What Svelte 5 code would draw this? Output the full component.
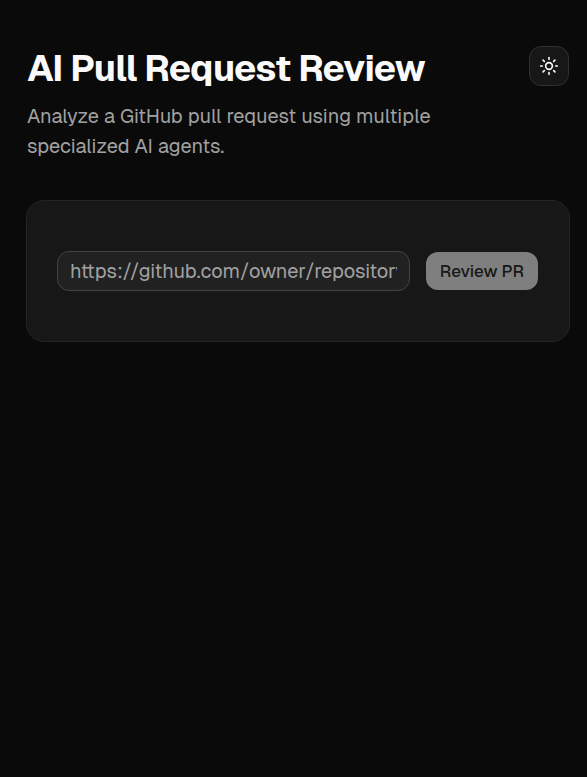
<script lang="ts">
	let prUrl = $state('');
	let isDark = $state(true);

	const rays = [0, 45, 90, 135, 180, 225, 270, 315];

	function toggleTheme() {
		isDark = !isDark;
	}

	function handleSubmit(event: SubmitEvent) {
		event.preventDefault();
	}
</script>

<main class="page" class:light={!isDark}>
	<header class="header">
		<div class="intro">
			<h1>AI Pull Request Review</h1>
			<p>Analyze a GitHub pull request using multiple specialized AI agents.</p>
		</div>
		<button type="button" class="theme-btn" onclick={toggleTheme} aria-label="Toggle theme">
			<svg viewBox="0 0 24 24" aria-hidden="true">
				<circle cx="12" cy="12" r="4" />
				{#each rays as angle}
					<path d="M12 2v2" transform="rotate({angle} 12 12)" />
				{/each}
			</svg>
		</button>
	</header>

	<section class="card">
		<form onsubmit={handleSubmit}>
			<input
				type="text"
				bind:value={prUrl}
				placeholder="https://github.com/owner/repository/pull/123"
				aria-label="Pull request URL"
			/>
			<button type="submit" class="review-btn" disabled={!prUrl}>Review PR</button>
		</form>
	</section>
</main>

<style>
	:global(body) {
		background: #0a0a0a;
	}

	.page {
		--bg: #0a0a0a;
		--card: #171717;
		--field: #212121;
		--border: #242424;
		--field-border: #444444;
		--text: #fafafa;
		--muted: #a1a1a1;

		box-sizing: border-box;
		min-height: 100vh;
		padding: 46px 17px 46px 26px;
		background: var(--bg);
		color: var(--text);
		font-family: Geist, Inter, 'Liberation Sans', sans-serif;
	}

	.page.light {
		--bg: #ffffff;
		--card: #ffffff;
		--field: #ffffff;
		--border: #e5e5e5;
		--field-border: #d4d4d4;
		--text: #0a0a0a;
		--muted: #737373;
	}

	.header {
		display: flex;
		align-items: flex-start;
		justify-content: space-between;
		gap: 20px;
		margin-bottom: 39px;
		padding: 0 1px;
	}

	.intro {
		max-width: 420px;
	}

	h1 {
		margin: 0 0 10px;
		font-size: 37px;
		font-weight: 700;
		line-height: 45px;
		letter-spacing: -0.02em;
		white-space: nowrap;
	}

	p {
		margin: 0;
		color: var(--muted);
		font-size: 20px;
		line-height: 30px;
	}

	.theme-btn {
		display: flex;
		flex-shrink: 0;
		align-items: center;
		justify-content: center;
		box-sizing: border-box;
		width: 40px;
		height: 40px;
		padding: 0;
		border: 1px solid #303030;
		border-radius: 12px;
		background: var(--card);
		color: var(--text);
		cursor: pointer;
	}

	.theme-btn svg {
		width: 20px;
		height: 20px;
		fill: none;
		stroke: currentColor;
		stroke-width: 2;
		stroke-linecap: round;
	}

	.card {
		padding: 50px 31px 50px 30px;
		border: 1px solid var(--border);
		border-radius: 18px;
		background: var(--card);
	}

	form {
		display: flex;
		align-items: center;
		gap: 16px;
	}

	input {
		flex: 1;
		min-width: 0;
		box-sizing: border-box;
		height: 40px;
		padding: 0 12px;
		border: 1px solid var(--field-border);
		border-radius: 12px;
		background: var(--field);
		color: var(--text);
		font-family: inherit;
		font-size: 20px;
	}

	input::placeholder {
		color: var(--muted);
		opacity: 1;
	}

	.review-btn {
		height: 38px;
		padding: 0 14px;
		border: none;
		border-radius: 12px;
		background: #e5e5e5;
		color: #171717;
		font-family: inherit;
		font-size: 17px;
		font-weight: 500;
		white-space: nowrap;
		cursor: pointer;
	}

	.review-btn:disabled {
		background: #7f7f7f;
		cursor: default;
	}
</style>
